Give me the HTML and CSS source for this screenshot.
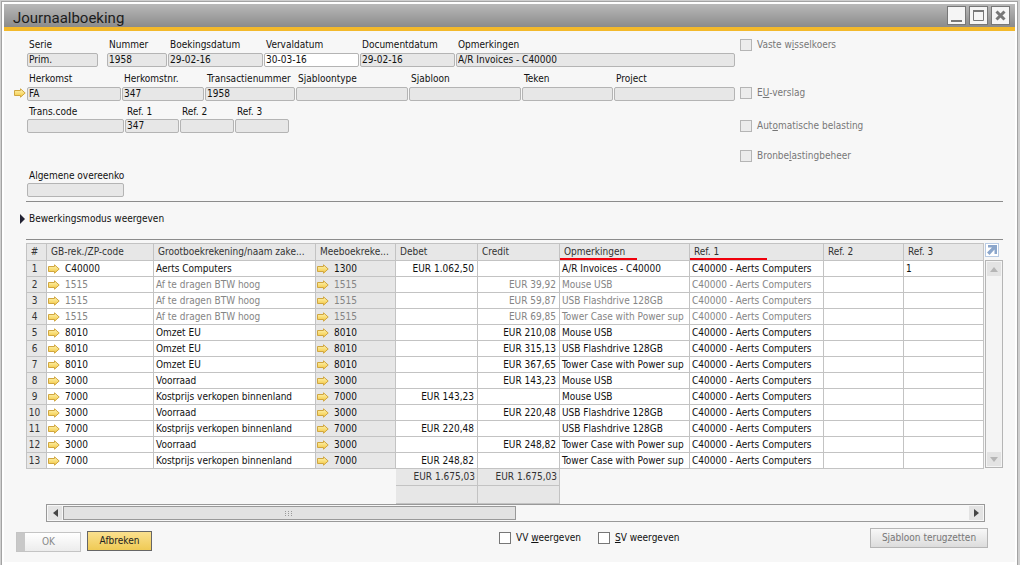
FILE: index.html
```html
<!DOCTYPE html>
<html lang="nl">
<head>
<meta charset="utf-8">
<title>Journaalboeking</title>
<link rel="stylesheet" href="styles.css">
</head>
<body>
<svg class="defs" aria-hidden="true">
  <defs>
    <linearGradient id="gold" x1="0" y1="0" x2="0" y2="1">
      <stop offset="0" stop-color="#fff6b8"/><stop offset="1" stop-color="#f3c63c"/>
    </linearGradient>
    <symbol id="arrow" viewBox="0 0 12 10">
      <path d="M.5 2.500H6.500V.8L11.200 5 6.500 9.200V7.500H.5Z" fill="url(#gold)" stroke="#d0a640" stroke-width="1"/>
    </symbol>
  </defs>
</svg>
<main class="window">
  <header class="titlebar">
    <h1 class="title">Journaalboeking</h1>
    <div class="window-buttons">
      <button class="window-button" type="button" aria-label="Minimaliseren"><svg viewBox="0 0 17 17"><path d="M3 14H14" stroke="#777" stroke-width="2"/></svg></button>
      <button class="window-button" type="button" aria-label="Maximaliseren"><svg viewBox="0 0 17 17"><path d="M3.500 4V13.500H13.500V4" fill="none" stroke="#777"/><path d="M3 4H14" stroke="#777" stroke-width="2"/></svg></button>
      <button class="window-button" type="button" aria-label="Sluiten"><svg viewBox="0 0 17 17"><path d="M4.500 4.500L12.500 12.500M12.500 4.500L4.500 12.500" stroke="#777" stroke-width="3"/></svg></button>
    </div>
  </header>
  <form class="content">
    <div class="form-head">
      <div class="fields">
        <div class="field-row">
          <div class="field w71 spaced"><label for="serie">Serie</label><input id="serie" value="Prim." readonly></div>
          <div class="field w60"><label for="nummer">Nummer</label><input id="nummer" value="1958" readonly></div>
          <div class="field w95"><label for="boek">Boekingsdatum</label><input id="boek" value="29-02-16" readonly></div>
          <div class="field w95"><label for="verval">Vervaldatum</label><input id="verval" class="editable" value="30-03-16"></div>
          <div class="field w95"><label for="doc">Documentdatum</label><input id="doc" value="29-02-16" readonly></div>
          <div class="field grow"><label for="opm">Opmerkingen</label><input id="opm" value="A/R Invoices - C40000" readonly></div>
        </div>
        <div class="field-row linked">
          <svg class="arrow row-arrow"><use href="#arrow"/></svg>
          <div class="field w94"><label for="herk">Herkomst</label><input id="herk" value="FA" readonly></div>
          <div class="field w82"><label for="herknr">Herkomstnr.</label><input id="herknr" value="347" readonly></div>
          <div class="field w90"><label for="trans">Transactienummer</label><input id="trans" value="1958" readonly></div>
          <div class="field w112"><label for="sjt">Sjabloontype</label><input id="sjt" readonly></div>
          <div class="field w112"><label for="sj">Sjabloon</label><input id="sj" readonly></div>
          <div class="field w91"><label for="teken">Teken</label><input id="teken" readonly></div>
          <div class="field grow"><label for="project">Project</label><input id="project" readonly></div>
        </div>
        <div class="field-row tight">
          <div class="field w97"><label for="code">Trans.code</label><input id="code" readonly></div>
          <div class="field w54"><label for="r1">Ref. 1</label><input id="r1" value="347" readonly></div>
          <div class="field w54"><label for="r2">Ref. 2</label><input id="r2" readonly></div>
          <div class="field w54"><label for="r3">Ref. 3</label><input id="r3" readonly></div>
        </div>
        <div class="field-row agreement">
          <div class="field w97"><label for="alg">Algemene overeenko</label><input id="alg" readonly></div>
        </div>
      </div>
      <div class="options">
        <label class="check off first"><input type="checkbox" disabled><span>Vaste w<u>i</u>sselkoers</span></label>
        <label class="check off second"><input type="checkbox" disabled><span>E<u>U</u>-verslag</span></label>
        <label class="check off third"><input type="checkbox" disabled><span>Aut<u>o</u>matische belasting</span></label>
        <label class="check off"><input type="checkbox" disabled><span>Bronbe<u>l</u>astingbeheer</span></label>
      </div>
    </div>
    <div class="edit-mode">
      <button class="disclosure" type="button"><svg viewBox="0 0 5 10"><path d="M0 0L5 5 0 10Z" fill="#223"/></svg>Bewerkingsmodus weergeven</button>
    </div>
    <div class="grid-area">
      <table class="grid">
        <colgroup><col class="c-num"><col class="c-code"><col class="c-name"><col class="c-mee"><col class="c-sum"><col class="c-sum"><col class="c-opm"><col class="c-ref1"><col class="c-ref2"><col></colgroup>
        <thead>
          <tr><th class="num">#</th><th>GB-rek./ZP-code</th><th>Grootboekrekening/naam zake...</th><th>Meeboekreke...</th><th>Debet</th><th>Credit</th><th class="marked">Opmerkingen</th><th class="marked">Ref. 1</th><th>Ref. 2</th><th>Ref. 3</th></tr>
        </thead>
        <tbody id="rows"></tbody>
        <tfoot>
          <tr><td colspan="4"></td><td class="total">EUR 1.675,03</td><td class="total">EUR 1.675,03</td><td colspan="4"></td></tr>
          <tr class="last"><td colspan="4"></td><td class="total"></td><td class="total"></td><td colspan="4"></td></tr>
        </tfoot>
      </table>
      <div class="side">
        <button class="expand" type="button" aria-label="Vergroten"><svg viewBox="0 0 12 12"><path d="M2 1H11V10H8.500V5.500L3.500 11 1 8.500 6 3.500H2Z" fill="#8ba6cb"/></svg></button>
        <div class="vscroll">
          <button type="button" aria-label="Omhoog"><svg viewBox="0 0 8 5"><path d="M0 5L4 0 8 5Z" fill="#b5b5b5"/></svg></button>
          <button type="button" aria-label="Omlaag"><svg viewBox="0 0 8 5"><path d="M0 0L4 5 8 0Z" fill="#b5b5b5"/></svg></button>
        </div>
      </div>
    </div>
    <div class="hscroll">
      <button type="button" aria-label="Links"><svg viewBox="0 0 5 8"><path d="M5 0L0 4 5 8Z" fill="#444"/></svg></button>
      <div class="track"><div class="thumb"><svg viewBox="0 0 8 5"><path d="M0 .5H8M0 2.500H8M0 4.500H8" stroke="#999" stroke-dasharray="1 2"/></svg></div></div>
      <button type="button" aria-label="Rechts"><svg viewBox="0 0 5 8"><path d="M0 0L5 4 0 8Z" fill="#444"/></svg></button>
    </div>
    <footer class="actions">
      <button class="button ok" type="button" disabled>OK</button>
      <button class="button cancel" type="button">Afbreken</button>
      <div class="footer-checks">
        <label class="check"><input type="checkbox"><span>VV <u>w</u>eergeven</span></label>
        <label class="check"><input type="checkbox"><span><u>S</u>V weergeven</span></label>
      </div>
      <button class="button reset" type="button" disabled>S<u>j</u>abloon terugzetten</button>
    </footer>
  </form>
</main>
<script src="rows.js"></script>
</body>
</html>
```
FILE: rows.js
```js
const tower = "Tower Case with Power sup";
const entries = [
  ["C40000", "Aerts Computers", "1300", "EUR 1.062,50", "", "A/R Invoices - C40000", "1"],
  ["1515", "Af te dragen BTW hoog", "1515", "", "EUR 39,92", "Mouse USB", ""],
  ["1515", "Af te dragen BTW hoog", "1515", "", "EUR 59,87", "USB Flashdrive 128GB", ""],
  ["1515", "Af te dragen BTW hoog", "1515", "", "EUR 69,85", tower, ""],
  ["8010", "Omzet EU", "8010", "", "EUR 210,08", "Mouse USB", ""],
  ["8010", "Omzet EU", "8010", "", "EUR 315,13", "USB Flashdrive 128GB", ""],
  ["8010", "Omzet EU", "8010", "", "EUR 367,65", tower, ""],
  ["3000", "Voorraad", "3000", "", "EUR 143,23", "Mouse USB", ""],
  ["7000", "Kostprijs verkopen binnenland", "7000", "EUR 143,23", "", "Mouse USB", ""],
  ["3000", "Voorraad", "3000", "", "EUR 220,48", "USB Flashdrive 128GB", ""],
  ["7000", "Kostprijs verkopen binnenland", "7000", "EUR 220,48", "", "USB Flashdrive 128GB", ""],
  ["3000", "Voorraad", "3000", "", "EUR 248,82", tower, ""],
  ["7000", "Kostprijs verkopen binnenland", "7000", "EUR 248,82", "", tower, ""]
];
const arrow = '<svg class="arrow"><use href="#arrow"/></svg>';
document.getElementById("rows").innerHTML = entries.map((e, i) =>
  `<tr class="${e[0] === "1515" ? "tax" : ""}"><td class="num">${i + 1}</td>` +
  `<td class="link">${arrow}${e[0]}</td><td>${e[1]}</td><td class="link shaded">${arrow}${e[2]}</td>` +
  `<td class="amount">${e[3]}</td><td class="amount">${e[4]}</td><td>${e[5]}</td>` +
  `<td>C40000 - Aerts Computers</td><td></td><td>${e[6]}</td></tr>`).join("");
```
FILE: styles.css
```css
* { box-sizing: border-box; }
body { margin: 0; padding: 1px 2px 0 1px; min-height: 100vh; display: flex; background: #cfcfcf; color: #111; font: 10px/14px "DejaVu Sans Condensed", "Noto Sans", sans-serif; }
button, input { font: inherit; color: inherit; margin: 0; padding: 0; }
svg { display: block; }
.defs { position: absolute; width: 0; height: 0; }
.window { flex: 1; min-width: 0; padding: 2px 2px 0; background: #fff; border: 1px solid #a3a3a3; border-bottom: 0; }
.titlebar { display: flex; align-items: center; justify-content: space-between; height: 27px; padding: 0 5px 0 9px; background: linear-gradient(#b9b9b9, #8b8b8b); border-bottom: 4px solid #f3b92b; }
.title { margin: 0; padding-top: 4px; font: 15px/20px Roboto, sans-serif; color: #1c1c1c; }
.window-buttons { display: flex; gap: 3px; }
.window-button { width: 19px; height: 19px; border: 1px solid #777; background: #f5f5f5; }
.content { display: flow-root; min-height: 531px; margin: 0; padding: 7px 11px 0 12px; background: #f7f7f7; }
.form-head { display: flex; gap: 5px; margin-left: 11px; }
.fields { width: 708px; }
.field-row { display: flex; gap: 1px; margin-bottom: 5px; position: relative; }
.field-row.tight { margin-top: -1px; }
.field-row.agreement { margin-top: 36px; margin-bottom: 4px; }
.field { display: flex; flex-direction: column; min-width: 0; }
.field label { padding-left: 2px; height: 15px; white-space: nowrap; }
.field input { width: 100%; height: 14px; padding: 0 1px; border: 1px solid #b4b4b4; border-radius: 2px; background: #e7e7e7; }
.field .editable { background: #fff; }
.field-row.tight label, .field-row.agreement label { height: 14px; }
.row-arrow { position: absolute; left: -13px; bottom: 3px; }
.w54 { width: 54px; } .w60 { width: 60px; } .w71 { width: 71px; } .w82 { width: 82px; }
.w90 { width: 90px; } .w91 { width: 91px; } .w94 { width: 94px; } .w95 { width: 95px; }
.w97 { width: 97px; } .w112 { width: 112px; }
.grow { flex: 1; }
.spaced { margin-right: 8px; }
.arrow { width: 12px; height: 10px; flex: none; }
.options { display: flex; flex-direction: column; align-items: flex-start; padding-top: 1px; }
.check { display: flex; align-items: center; gap: 5px; height: 12px; white-space: nowrap; }
.check input { appearance: none; width: 12px; height: 12px; border: 1px solid #777; background: #fff; }
.check.off { color: #777; }
.check.off input { border-color: #b5b5b5; background: #ececec; }
.first { margin-bottom: 36px; } .second { margin-bottom: 21px; } .third { margin-bottom: 18px; }
.edit-mode { display: flex; align-items: center; height: 39px; margin: 0 1px 3px 10px; border: 1px solid #8c8c8c; border-width: 1px 0; }
.disclosure { display: flex; align-items: center; gap: 4px; margin: -4px 0 0 -6px; border: 0; background: none; }
.disclosure svg { width: 5px; height: 10px; }
.grid-area { display: flex; gap: 1px; margin-left: 10px; margin-right: 1px; }
.grid { flex: 1; width: 0; table-layout: fixed; border-collapse: separate; border-spacing: 0; }
.c-num { width: 21px; } .c-code { width: 107px; } .c-name { width: 162px; } .c-mee { width: 80px; } .c-sum { width: 82px; }
.c-opm { width: 130px; } .c-ref1 { width: 134px; } .c-ref2 { width: 80px; }
.grid th, .grid td { height: 16px; padding: 0 2px; border: 1px solid #c3c3c3; border-width: 0 1px 1px 0; line-height: 14px; text-align: left; font-weight: normal; white-space: nowrap; overflow: hidden; }
.grid td { background: #fff; }
.grid th { position: relative; height: 18px; padding: 0 4px; border-top-width: 1px; background: #e7e7e7; color: #333; }
.grid .num { padding: 0 4px 0 0; border-left-width: 1px; background: #e7e7e7; color: #333; text-align: center; }
.grid .shaded { background: #e7e7e7; }
.grid .amount { padding-right: 3px; text-align: right; }
.grid .tax td:not(.num) { color: #858585; }
.link .arrow { display: inline-block; margin: 0 5px 0 0; vertical-align: -2px; }
.grid .link { padding: 0 1px; }
.marked::after { content: ""; position: absolute; left: 0; bottom: 0; width: 77px; height: 2px; background: #f0000c; }
.grid tfoot td { height: 17px; border: 0; background: none; }
.grid tfoot .last td { height: 18px; }
.grid tfoot .total { padding-right: 2px; border: 1px solid #c3c3c3; border-width: 0 1px 1px 0; background: #e7e7e7; color: #333; text-align: right; }
.side { display: flex; flex-direction: column; width: 18px; padding-bottom: 36px; }
.expand { display: flex; align-items: center; justify-content: center; width: 14px; height: 14px; margin-bottom: 3px; border: 1px solid #b9cbe3; background: #fff; }
.expand svg { width: 12px; height: 12px; }
.vscroll { display: flex; flex: 1; flex-direction: column; justify-content: space-between; padding: 1px; border: 1px solid #b5b5b5; background: #f4f4f4; }
.vscroll button, .hscroll button { display: flex; flex: none; align-items: center; justify-content: center; width: 14px; height: 14px; border: 0; background: #e3e3e3; }
.vscroll svg { width: 8px; height: 5px; }
.hscroll { display: flex; align-items: center; gap: 1px; height: 18px; margin: 0 19px 0 30px; padding: 1px; border: 1px solid #999; background: #f7f7f7; }
.hscroll button svg { width: 5px; height: 8px; }
.track { flex: 1; }
.thumb { display: flex; align-items: center; justify-content: center; width: 50%; height: 14px; border: 1px solid #999; background: #e2e2e2; }
.thumb svg { width: 8px; height: 5px; }
.actions { display: flex; align-items: flex-start; padding: 6px 16px 0 0; }
.button { height: 20px; border: 1px solid #b5b5b5; background: linear-gradient(#f8f8f8, #dcdcdc); }
.ok { width: 65px; margin: 4px 6px 0 0; border-color: #c4c4c4; color: #888; background: linear-gradient(90deg, #c8c8c8 8px, transparent 8px), linear-gradient(#fff, #ececec); }
.cancel { width: 65px; margin-top: 3px; border-color: #666; background: linear-gradient(#fae08e, #efca55); color: #222; }
.footer-checks { display: flex; gap: 17px; margin: 4px auto 0 347px; }
.reset { width: 118px; color: #777; }
```
